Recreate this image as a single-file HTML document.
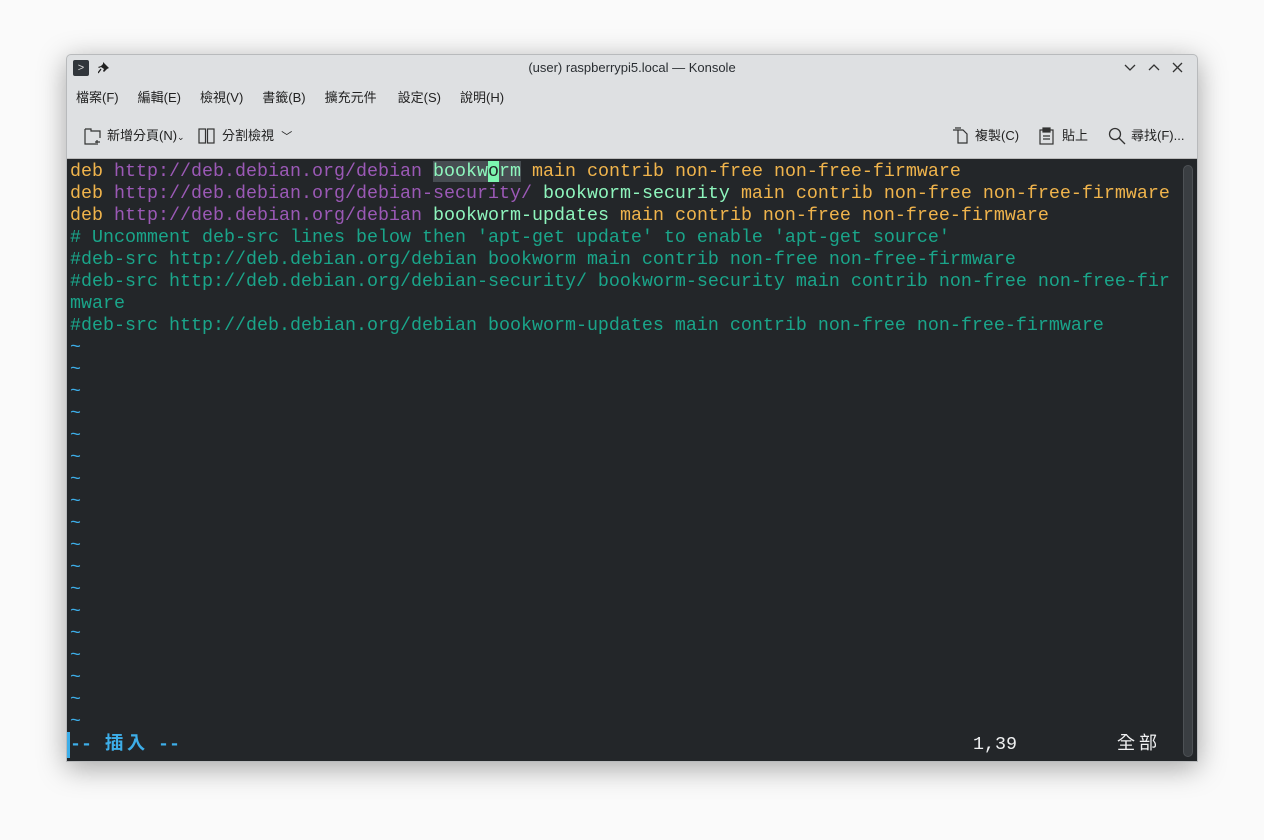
<!DOCTYPE html>
<html><head><meta charset="utf-8"><style>
*{margin:0;padding:0;box-sizing:border-box}
body{width:1264px;height:840px;background:#fafafa;position:relative;overflow:hidden;font-family:"Liberation Sans","Noto Sans CJK TC",sans-serif}
.win{position:absolute;left:66px;top:54px;width:1132px;height:708px;background:#dee0e2;border-radius:5px 5px 0 0;box-shadow:0 6px 28px rgba(0,0,0,.35);overflow:hidden;border:1px solid #b8babc}
.title{position:absolute;top:0;left:0;right:0;height:28px;font-size:13px;color:#2a2e32;text-align:center;line-height:26px}
.menu{position:absolute;top:32px;left:9px;font-size:13px;color:#222;line-height:22px}
.menu span{margin-right:19px}
.tb{position:absolute;top:70px;font-size:13px;color:#222;line-height:22px}
.term{position:absolute;left:0;top:103px;width:1130px;height:605px;background:#232629;border-top:1px solid #bbb}
pre,.st{font-family:"Liberation Mono","Noto Sans CJK TC",monospace;font-size:18.33px;line-height:22px;color:#eff0f1}
pre{position:absolute;left:3px;top:2px}
.st{position:absolute;top:575px;white-space:pre}
.o{color:#f0b44c}.p{color:#9b59b6}.g{color:#8ef5bd}.c{color:#1aa58a}.t{color:#3daee9}
.hl{background:#474d52}.cur{background:#7cf5b0;color:#232629}
.sb{position:absolute;right:4px;top:6px;width:10px;height:592px;background:#3a3e42;border-radius:5px;border:1px solid #4d5155}
.w{display:inline-block;width:22px;text-align:center}
</style></head><body>
<div class="win">
 <div class="title">(user) raspberrypi5.local — Konsole</div>
 <div style="position:absolute;left:6px;top:5px;width:16px;height:16px;background:#31363b;border-radius:2px;color:#ddd;font-size:11px;line-height:16px;text-align:center">&gt;</div>
 <svg style="position:absolute;left:31px;top:6px" width="12" height="13" viewBox="0 0 12 13" fill="#222"><path d="M5 1l6 6-2 1-3 3-1-1 1-2-3-2-2 1L0 6l3-1 2-2z"/><path d="M3 8l-3 4" stroke="#222" stroke-width="1.3"/></svg>
 <svg style="position:absolute;right:8px;top:6px" width="66" height="14" viewBox="0 0 66 14" fill="none" stroke="#333" stroke-width="1.3"><path d="M2 4l5 5 5-5"/><path d="M26 9l5-5 5 5"/><path d="M50 2l9 9M59 2l-9 9"/></svg>
 <div class="menu"><span>檔案(F)</span><span>編輯(E)</span><span>檢視(V)</span><span>書籤(B)</span><span style="margin-right:21px">擴充元件</span><span>設定(S)</span><span>說明(H)</span></div>
 <svg style="position:absolute;left:17px;top:73px" width="18" height="17" fill="none" stroke="#333" stroke-width="1.2"><path d="M1 1h6v2h9v7M1 1v15h11"/><path d="M13 12v5M11 14h5"/></svg>
 <div class="tb" style="left:40px">新增分頁(N)<span style="font-size:9px">⌄</span></div>
 <svg style="position:absolute;left:131px;top:73px" width="17" height="16" fill="none" stroke="#333" stroke-width="1.2"><rect x="1" y="1" width="6.5" height="14"/><rect x="9.5" y="1" width="6.5" height="14"/></svg>
 <div class="tb" style="left:155px">分割檢視 &nbsp;<span style="font-size:11px">﹀</span></div>
 <svg style="position:absolute;left:885px;top:72px" width="16" height="18" fill="none" stroke="#333" stroke-width="1.2"><path d="M1 3h5v13h9V7l-4-4H6"/><path d="M3 1h6"/></svg>
 <div class="tb" style="left:908px">複製(C)</div>
 <svg style="position:absolute;left:972px;top:72px" width="15" height="18" fill="none" stroke="#333" stroke-width="1.2"><rect x="1" y="3" width="13" height="14"/><rect x="4" y="1" width="7" height="4" fill="#333"/><path d="M4 9h7M4 12h7"/></svg>
 <div class="tb" style="left:995px">貼上</div>
 <svg style="position:absolute;left:1041px;top:72px" width="18" height="18" fill="none" stroke="#333" stroke-width="1.3"><circle cx="7" cy="7" r="5.5"/><path d="M11 11l6 6"/></svg>
 <div class="tb" style="left:1064px">尋找(F)...</div>
 <div class="term">
<pre><span class="o">deb</span> <span class="p">http://deb.debian.org/debian</span> <span class="g hl">bookw<span class="cur">o</span>rm</span> <span class="o">main contrib non-free non-free-firmware</span>
<span class="o">deb</span> <span class="p">http://deb.debian.org/debian-security/</span> <span class="g">bookworm-security</span> <span class="o">main contrib non-free non-free-firmware</span>
<span class="o">deb</span> <span class="p">http://deb.debian.org/debian</span> <span class="g">bookworm-updates</span> <span class="o">main contrib non-free non-free-firmware</span>
<span class="c"># Uncomment deb-src lines below then 'apt-get update' to enable 'apt-get source'
#deb-src http://deb.debian.org/debian bookworm main contrib non-free non-free-firmware
#deb-src http://deb.debian.org/debian-security/ bookworm-security main contrib non-free non-free-fir
mware
#deb-src http://deb.debian.org/debian bookworm-updates main contrib non-free non-free-firmware</span>
<span class="t">~
~
~
~
~
~
~
~
~
~
~
~
~
~
~
~
~
~</span></pre>
  <div class="st t" style="left:3px;font-weight:bold">-- <span class="w">插</span><span class="w">入</span> --</div>
  <div class="st" style="left:906px">1,39</div>
  <div class="st" style="left:1048px"><span class="w">全</span><span class="w">部</span></div>
  <div style="position:absolute;left:0;top:573px;width:3px;height:26px;background:#3daee9"></div>
  <div class="sb"></div>
 </div>
</div>
</body></html>
